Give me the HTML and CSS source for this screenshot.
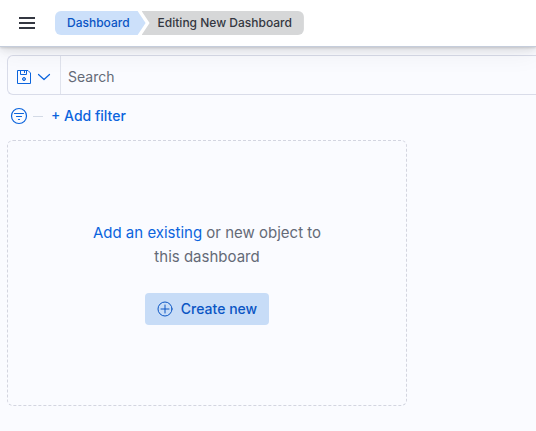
FILE: index.html
```html
<!DOCTYPE html>
<html lang="en">
<head>
<meta charset="utf-8">
<title>Editing New Dashboard</title>
<link rel="stylesheet" href="styles.css">
</head>
<body>
<header class="header">
  <button class="menu-button" type="button" aria-label="Toggle navigation">
    <svg width="16" height="16" viewBox="0 0 16 16" fill="#343741"><path d="M0 2h16v2H0zM0 7h16v2H0zM0 12h16v2H0z"/></svg>
  </button>
  <nav class="breadcrumbs" aria-label="Breadcrumbs">
    <a class="crumb crumb-link" href="#">Dashboard</a>
    <span class="crumb crumb-current" aria-current="page">Editing New Dashboard</span>
  </nav>
</header>
<main class="content">
  <div class="query-bar">
    <button class="saved-query" type="button" aria-label="Saved queries">
      <svg width="16" height="16" viewBox="0 0 16 16" fill="none" stroke="#0b64dd"><path d="M1.500 1.500h10.500l2.500 2.500v10.500h-13z"/><path d="M4.500 1.500v4h6v-4M8.500 2v2"/><circle cx="8" cy="10" r="1.500" fill="#8bb9f5"/></svg>
      <svg width="16" height="16" viewBox="0 0 16 16" fill="none" stroke="#0b64dd" stroke-width="1.200" stroke-linecap="round" stroke-linejoin="round"><path d="M2.500 5.500l5.500 5 5.500-5"/></svg>
    </button>
    <input class="search" type="text" placeholder="Search" aria-label="Search">
  </div>
  <div class="filters">
    <button class="filter-options" type="button" aria-label="Filter options">
      <svg width="18" height="18" viewBox="0 0 18 18" fill="none" stroke="#0b64dd" stroke-width="1.200" stroke-linecap="round"><circle cx="9" cy="9" r="7.500"/><path d="M4.500 6.500h9M6.500 9.500h5M8.500 12.500h1"/></svg>
    </button>
    <span class="filter-line"></span>
    <button class="add-filter" type="button">+ Add filter</button>
  </div>
  <section class="empty-panel">
    <p class="message"><a href="#">Add an existing</a> or new object to<br>this dashboard</p>
    <button class="create-button" type="button">
      <svg width="16" height="16" viewBox="0 0 16 16" fill="none" stroke="#0a55c4" stroke-linecap="round"><circle cx="8" cy="8" r="7"/><path d="M8 4v8M4 8h8"/></svg>
      <span>Create new</span>
    </button>
  </section>
</main>
</body>
</html>
```
FILE: styles.css
```css
* {
  box-sizing: border-box;
}

body {
  margin: 0;
  min-height: 100vh;
  background: #fafbff;
  color: #646a77;
  font: 14px/20px Inter, "Liberation Sans", sans-serif;
}

button {
  padding: 0;
  border: 0;
  background: none;
  font: inherit;
  cursor: pointer;
}

svg {
  display: block;
  flex: none;
}

a {
  color: #0b64dd;
  text-decoration: none;
}

.header {
  position: relative;
  display: flex;
  align-items: center;
  gap: 20px;
  height: 47px;
  padding: 0 19px;
  background: #fff;
  border-bottom: 1px solid #c5cddb;
  box-shadow: 0 1px 2px rgba(0, 0, 0, 0.12), 0 3px 8px rgba(0, 0, 0, 0.1), 0 8px 24px rgba(0, 0, 0, 0.05);
}

.breadcrumbs {
  display: flex;
  font-size: 12px;
  font-weight: 500;
  line-height: 24px;
}

.crumb {
  white-space: nowrap;
}

.crumb-link {
  padding: 0 16px 0 12px;
  border-radius: 6px 0 0 6px;
  background: #cce0fa;
  color: #0a55c4;
  clip-path: polygon(0 0, calc(100% - 8px) 0, 100% 50%, calc(100% - 8px) 100%, 0 100%);
}

.crumb-current {
  margin-left: -4px;
  padding: 0 12px 0 16px;
  border-radius: 0 6px 6px 0;
  background: #d6d7d8;
  color: #343741;
  clip-path: polygon(0 0, 100% 0, 100% 100%, 0 100%, 8px 50%);
}

.content {
  padding: 8px 0 24px 7px;
}

.query-bar {
  display: flex;
  height: 40px;
  border: 1px solid #d9dce9;
  border-right: 0;
  border-radius: 6px 0 0 6px;
}

.saved-query {
  display: flex;
  align-items: center;
  gap: 4px;
  padding: 4px 8px 0;
  border-right: 1px solid #e0e3ed;
}

.search {
  flex: 1;
  min-width: 0;
  padding: 4px 8px 0 7px;
  border: 0;
  background: none;
  color: #343741;
  font: inherit;
  outline: 0;
}

.search::placeholder {
  color: #646a77;
  opacity: 1;
}

.filters {
  display: flex;
  align-items: center;
  height: 42px;
  padding-left: 3px;
}

.filter-line {
  width: 10px;
  height: 1px;
  margin: 0 8px 0 5px;
  background: #d3dae6;
}

.add-filter {
  color: #0b64dd;
  font-weight: 500;
}

.empty-panel {
  display: flex;
  flex-direction: column;
  align-items: center;
  justify-content: center;
  gap: 24px;
  width: 400px;
  max-width: 100%;
  margin-top: 3px;
  padding: 80px 72px;
  border: 1px dashed #d3d5e0;
  border-radius: 6px;
}

.message {
  margin: 0;
  font-size: 15px;
  line-height: 24px;
  text-align: center;
}

.create-button {
  display: flex;
  align-items: center;
  gap: 8px;
  height: 32px;
  padding: 0 12px;
  border-radius: 4px;
  background: #c7dcf7;
  color: #0a55c4;
  font-weight: 500;
}
```
